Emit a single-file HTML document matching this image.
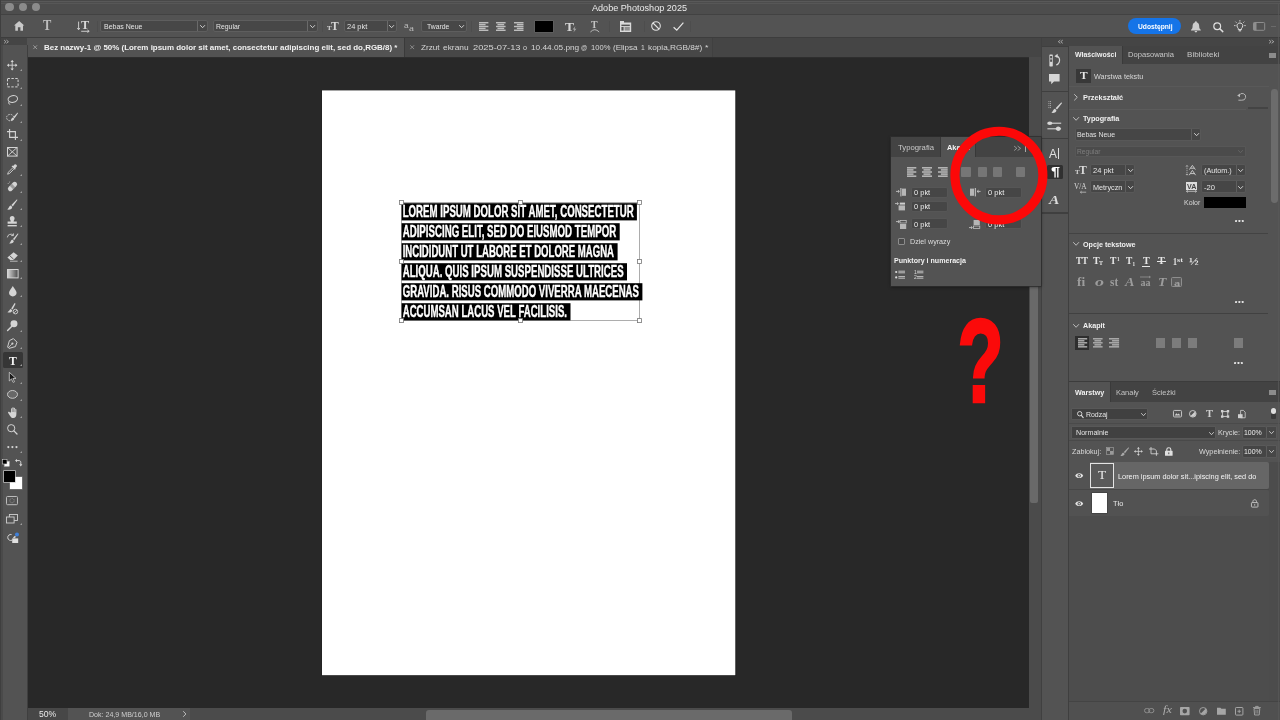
<!DOCTYPE html>
<html lang="pl">
<head>
<meta charset="utf-8">
<title>Adobe Photoshop 2025</title>
<style>
*{box-sizing:border-box;margin:0;padding:0}
html,body{width:1280px;height:720px;overflow:hidden;background:#535353}
body{font-family:"Liberation Sans",sans-serif;font-size:7.5px;color:#ddd;position:relative}
#app{position:absolute;left:0;top:0;width:1280px;height:720px;overflow:hidden;will-change:transform}
.a{position:absolute}
.t{position:absolute;white-space:nowrap;transform-origin:0 50%;display:block}
.b{font-weight:bold}
svg{position:absolute;overflow:visible}
.fld{position:absolute;background:#454545;box-shadow:0 0 0 .6px #6b6b6b}
</style>
</head>
<body>
<div id="app">
<!-- base -->
<div class="a" style="left:0px;top:0px;width:1280px;height:14.5px;background:#4d4d4d;"></div>
<div class="a" style="left:0px;top:0px;width:1280px;height:1px;background:#484848;"></div>
<div class="a" style="left:0px;top:1px;width:1280px;height:1px;background:#595959;"></div>
<div class="a" style="left:0px;top:3px;width:1280px;height:1px;background:#575757;"></div>
<div class="a" style="left:0px;top:13.6px;width:1280px;height:1.2px;background:#424242;"></div>
<div class="a" style="left:0px;top:14.8px;width:1280px;height:22.6px;background:#535353;"></div>
<div class="a" style="left:0px;top:37.2px;width:1280px;height:1px;background:#3d3d3d;"></div>
<div class="a" style="left:28px;top:38.2px;width:1002px;height:18.8px;background:#454545;"></div>
<div class="a" style="left:28px;top:57px;width:1001px;height:651.4px;background:#282828;"></div>
<div class="a" style="left:28px;top:56.6px;width:1001px;height:1px;background:#2e2e2e;"></div>
<div class="a" style="left:0px;top:38.2px;width:27.4px;height:681.8px;background:#535353;"></div>
<div class="a" style="left:0px;top:38.2px;width:27.4px;height:7.2px;background:#454545;"></div>
<div class="a" style="left:27px;top:45px;width:1px;height:675px;background:#3f3f3f;"></div>
<div class="a" style="left:0px;top:45px;width:2.6px;height:675px;background:#4a4a4a;"></div>
<div class="a" style="left:28px;top:708.4px;width:1001px;height:11.6px;background:#4b4b4b;"></div>
<div class="a" style="left:28px;top:708.4px;width:39.5px;height:11.6px;background:#474747;"></div>
<div class="a" style="left:67.5px;top:708.4px;width:122.5px;height:11.6px;background:#535353;"></div>
<div class="a" style="left:426px;top:710.4px;width:366px;height:9.6px;background:#6a6a6a;border-radius:3px 3px 0 0"></div>
<div class="a" style="left:1029px;top:38.2px;width:12px;height:681.8px;background:#4b4b4b;"></div>
<div class="a" style="left:1029px;top:38.2px;width:12px;height:18.8px;background:#454545;"></div>
<div class="a" style="left:1029.6px;top:263px;width:8.4px;height:240px;background:#696969;border-radius:0 0 2px 2px"></div>
<div class="a" style="left:1040.6px;top:38.2px;width:1.4px;height:681.8px;background:#404040;"></div>
<div class="a" style="left:1042px;top:38.2px;width:26px;height:681.8px;background:#535353;"></div>
<div class="a" style="left:1042px;top:38.2px;width:238px;height:7.8px;background:#454545;"></div>
<div class="a" style="left:1067.6px;top:46px;width:1.6px;height:674px;background:#3f3f3f;"></div>
<div class="a" style="left:1069px;top:46px;width:211px;height:674px;background:#535353;"></div>
<div class="a" style="left:0px;top:0px;width:1px;height:720px;background:#3f3f3f;"></div>
<span class="t" style="left:39.2px;top:710.35px;font-size:9px;line-height:9px;color:#e8e8e8;transform:scaleX(0.9548);">50%</span>
<span class="t" style="left:88.8px;top:710.7px;font-size:7.5px;line-height:7.5px;color:#cfcfcf;transform:scaleX(0.9436);">Dok: 24,9 MB/16,0 MB</span>
<svg style="left:183.3px;top:711.2px" width="3.4" height="6" viewBox="0 0 3.4 6"><path d="M0.5 0.5 L2.9 3 L0.5 5.5" fill="none" stroke="#c8c8c8" stroke-width="0.9" stroke-linecap="round" stroke-linejoin="round"/></svg>
<!-- top -->
<div class="a" style="left:5.2px;top:3.05px;width:8.4px;height:8.4px;background:#8b8b8b;border-radius:50%"></div>
<div class="a" style="left:18.55px;top:3.05px;width:8.4px;height:8.4px;background:#8b8b8b;border-radius:50%"></div>
<div class="a" style="left:31.8px;top:3.05px;width:8.4px;height:8.4px;background:#8b8b8b;border-radius:50%"></div>
<span class="t" style="left:592px;top:4.45px;font-size:9px;line-height:9px;color:#ececec;transform:scaleX(1.0097);">Adobe Photoshop 2025</span>
<svg style="left:13.5px;top:21.2px;" width="10.3" height="9.8" viewBox="0 0 10.3 9.8"><path d="M5.15 0 L10.3 4.6 L9 4.6 L9 9.8 L6.4 9.8 L6.4 6.3 L3.9 6.3 L3.9 9.8 L1.3 9.8 L1.3 4.6 L0 4.6 Z" fill="#c9c9c9"/></svg>
<span class="t b" style="left:42.5px;top:18.85px;font-size:13.8px;line-height:13.8px;color:#bdbdbd;transform:scaleX(0.9017);font-family:'Liberation Serif',serif;">T</span>
<span class="t b" style="left:81px;top:20.1px;font-size:11.5px;line-height:11.5px;color:#d8d8d8;transform:scaleX(1.0690);font-family:'Liberation Serif',serif;">T</span>
<svg style="left:77px;top:21px;" width="13" height="11.4" viewBox="0 0 13 11.4"><path d="M1.6 0.6 V8.4 M0.3 7 L1.6 8.8 L2.9 7" fill="none" stroke="#d8d8d8" stroke-width="0.9"/><path d="M4.2 10.3 H11.8 M10.4 9 L12.2 10.3 L10.4 11.4" fill="none" stroke="#d8d8d8" stroke-width="0.9"/></svg>
<div class="a" style="left:97.1px;top:21px;width:0.8px;height:10.5px;background:#4d4d4d;"></div>
<div class="a" style="left:101px;top:21px;width:105.5px;height:10.2px;background:#474747;box-shadow:0 0 0 .5px #6a6a6a;border-radius:1px"></div>
<div class="a" style="left:197.2px;top:21px;width:0.6px;height:10.2px;background:#6a6a6a;"></div>
<svg style="left:199.6px;top:24.9px" width="5.2" height="3.2" viewBox="0 0 5.2 3.2"><path d="M0.5 0.5 L2.6 2.7 L4.7 0.5" fill="none" stroke="#d0d0d0" stroke-width="1" stroke-linecap="round" stroke-linejoin="round"/></svg>
<span class="t" style="left:104px;top:23px;font-size:7.5px;line-height:7.5px;color:#e4e4e4;transform:scaleX(0.9326);">Bebas Neue</span>
<div class="a" style="left:213.5px;top:21px;width:103.5px;height:10.2px;background:#474747;box-shadow:0 0 0 .5px #6a6a6a;border-radius:1px"></div>
<div class="a" style="left:307.2px;top:21px;width:0.6px;height:10.2px;background:#6a6a6a;"></div>
<svg style="left:309.8px;top:24.9px" width="5.2" height="3.2" viewBox="0 0 5.2 3.2"><path d="M0.5 0.5 L2.6 2.7 L4.7 0.5" fill="none" stroke="#d0d0d0" stroke-width="1" stroke-linecap="round" stroke-linejoin="round"/></svg>
<span class="t" style="left:216px;top:23px;font-size:7.5px;line-height:7.5px;color:#e4e4e4;transform:scaleX(0.9137);">Regular</span>
<div class="a" style="left:321.6px;top:21px;width:0.8px;height:10.5px;background:#4d4d4d;"></div>
<span class="t b" style="left:330.5px;top:20.2px;font-size:12.5px;line-height:12.5px;color:#d8d8d8;transform:scaleX(0.9235);font-family:'Liberation Serif',serif;">T</span>
<span class="t b" style="left:326.6px;top:25.15px;font-size:7px;line-height:7px;color:#d8d8d8;transform:scaleX(0.9852);font-family:'Liberation Serif',serif;">T</span>
<div class="a" style="left:345px;top:21px;width:50.6px;height:10.2px;background:#474747;box-shadow:0 0 0 .5px #6a6a6a;border-radius:1px"></div>
<div class="a" style="left:386.7px;top:21px;width:0.6px;height:10.2px;background:#6a6a6a;"></div>
<svg style="left:388.8px;top:24.9px" width="5.2" height="3.2" viewBox="0 0 5.2 3.2"><path d="M0.5 0.5 L2.6 2.7 L4.7 0.5" fill="none" stroke="#d0d0d0" stroke-width="1" stroke-linecap="round" stroke-linejoin="round"/></svg>
<span class="t" style="left:347.2px;top:23px;font-size:7.5px;line-height:7.5px;color:#e4e4e4;transform:scaleX(0.9936);">24 pkt</span>
<span class="t" style="left:404px;top:22.05px;font-size:8px;line-height:8px;color:#bdbdbd;transform:scaleX(1.0339);">a</span>
<span class="t" style="left:408.6px;top:23.55px;font-size:8.6px;line-height:8.6px;color:#bdbdbd;transform:scaleX(1.3100);font-family:'Liberation Serif',serif;">a</span>
<div class="a" style="left:422px;top:21px;width:43.6px;height:10.2px;background:#474747;box-shadow:0 0 0 .5px #6a6a6a;border-radius:1px"></div>
<svg style="left:458.8px;top:24.9px" width="5.2" height="3.2" viewBox="0 0 5.2 3.2"><path d="M0.5 0.5 L2.6 2.7 L4.7 0.5" fill="none" stroke="#d0d0d0" stroke-width="1" stroke-linecap="round" stroke-linejoin="round"/></svg>
<span class="t" style="left:427px;top:23px;font-size:7.5px;line-height:7.5px;color:#e4e4e4;transform:scaleX(0.9107);">Twarde</span>
<div class="a" style="left:470.6px;top:21px;width:0.8px;height:10.5px;background:#4d4d4d;"></div>
<svg style="left:479px;top:22px;" width="9.4" height="9" viewBox="0 0 9.4 9"><rect x="0" y="0" width="9.4" height="1.44" fill="#bdbdbd"/><rect x="0" y="1.89" width="6.58" height="1.44" fill="#bdbdbd"/><rect x="0" y="3.78" width="9.4" height="1.44" fill="#bdbdbd"/><rect x="0" y="5.67" width="6.58" height="1.44" fill="#bdbdbd"/><rect x="0" y="7.56" width="9.4" height="1.44" fill="#bdbdbd"/></svg>
<svg style="left:496px;top:22px;" width="9.6" height="9" viewBox="0 0 9.6 9"><rect x="0" y="0" width="9.6" height="1.44" fill="#bdbdbd"/><rect x="1.44" y="1.89" width="6.72" height="1.44" fill="#bdbdbd"/><rect x="0" y="3.78" width="9.6" height="1.44" fill="#bdbdbd"/><rect x="1.44" y="5.67" width="6.72" height="1.44" fill="#bdbdbd"/><rect x="0" y="7.56" width="9.6" height="1.44" fill="#bdbdbd"/></svg>
<svg style="left:513.5px;top:22px;" width="9.5" height="9" viewBox="0 0 9.5 9"><rect x="0" y="0" width="9.5" height="1.44" fill="#bdbdbd"/><rect x="2.85" y="1.89" width="6.65" height="1.44" fill="#bdbdbd"/><rect x="0" y="3.78" width="9.5" height="1.44" fill="#bdbdbd"/><rect x="2.85" y="5.67" width="6.65" height="1.44" fill="#bdbdbd"/><rect x="0" y="7.56" width="9.5" height="1.44" fill="#bdbdbd"/></svg>
<div class="a" style="left:535px;top:21px;width:18px;height:11px;background:#000;box-shadow:0 0 0 .5px #6a6a6a"></div>
<span class="t b" style="left:564.6px;top:19.75px;font-size:13px;line-height:13px;color:#d8d8d8;transform:scaleX(1.0379);font-family:'Liberation Serif',serif;">T</span>
<svg style="left:571.5px;top:25.5px;" width="4.9" height="6.5" viewBox="0 0 4.9 6.5"><path d="M3.4 0 L0.6 3.6 H2.4 L1.4 6.5 L4.4 2.7 H2.6 Z" fill="#d8d8d8" stroke="#535353" stroke-width="0.4"/></svg>
<span class="t b" style="left:591.4px;top:20.4px;font-size:10.5px;line-height:10.5px;color:#c4c4c4;transform:scaleX(0.9423);font-family:'Liberation Serif',serif;">T</span>
<svg style="left:589.6px;top:28.6px;" width="9.6" height="3.4" viewBox="0 0 9.6 3.4"><path d="M0.4 3 Q4.8 -1.6 9.2 3" fill="none" stroke="#c4c4c4" stroke-width="0.9"/></svg>
<div class="a" style="left:608.6px;top:21px;width:0.8px;height:10.5px;background:#4d4d4d;"></div>
<svg style="left:620px;top:21px;" width="11.2" height="11" viewBox="0 0 11.2 11"><path d="M0 0 H4 V1.6 H11.2 V11 H0 Z" fill="#dadada"/><rect x="1.4" y="3.6" width="8.4" height="1.5" fill="#535353"/><rect x="1.4" y="6" width="2.2" height="3.6" fill="#535353"/><rect x="4.6" y="6" width="5.2" height="3.6" fill="#535353" opacity=".55"/></svg>
<div class="a" style="left:643.6px;top:21px;width:0.8px;height:10.5px;background:#4d4d4d;"></div>
<svg style="left:651px;top:21.3px;" width="10" height="10" viewBox="0 0 10 10"><circle cx="5" cy="5" r="4.3" fill="none" stroke="#e2e2e2" stroke-width="1.1"/><path d="M2 2 L8 8" stroke="#e2e2e2" stroke-width="1.1"/></svg>
<svg style="left:672.6px;top:22px;" width="11" height="8.8" viewBox="0 0 11 8.8"><path d="M0.6 5.2 L3.8 8.2 L10.4 0.6" fill="none" stroke="#e6e6e6" stroke-width="1.2"/></svg>
<div class="a" style="left:690.2px;top:21px;width:0.8px;height:10.5px;background:#4d4d4d;"></div>
<div class="a" style="left:1128px;top:17.6px;width:52.6px;height:16.8px;background:#1574e8;border-radius:9px"></div>
<span class="t b" style="left:1137.5px;top:22.7px;font-size:7.5px;line-height:7.5px;color:#fff;transform:scaleX(0.8903);">Udostępnij</span>
<svg style="left:1191.4px;top:20.6px;" width="9.8" height="11.4" viewBox="0 0 9.8 11.4"><path d="M4.9 0.2 C5.5 0.2 5.8 0.7 5.8 1.2 C7.6 1.8 8.2 3.4 8.2 5.2 C8.2 7.2 8.8 8 9.8 8.8 V9.5 H0 V8.8 C1 8 1.6 7.2 1.6 5.2 C1.6 3.4 2.2 1.8 4 1.2 C4 0.7 4.3 0.2 4.9 0.2 Z" fill="#cdcdcd"/><path d="M3.6 10.1 H6.2 C6.2 11 5.6 11.4 4.9 11.4 C4.2 11.4 3.6 11 3.6 10.1 Z" fill="#cdcdcd"/></svg>
<svg style="left:1213px;top:21.6px;" width="10.4" height="10.2" viewBox="0 0 10.4 10.2"><circle cx="4.2" cy="4.2" r="3.4" fill="none" stroke="#dedede" stroke-width="1.2"/><path d="M6.8 6.8 L9.8 9.6" stroke="#dedede" stroke-width="1.5" stroke-linecap="round"/></svg>
<svg style="left:1233.6px;top:20.4px;" width="11.8" height="11.6" viewBox="0 0 11.8 11.6"><path d="M5.9 3 C7.7 3 8.8 4.3 8.8 5.8 C8.8 7 8 7.7 7.5 8.6 V9.6 H4.3 V8.6 C3.8 7.7 3 7 3 5.8 C3 4.3 4.1 3 5.9 3 Z" fill="none" stroke="#e0e0e0" stroke-width="1"/><path d="M4.7 10.8 H7.1" stroke="#e0e0e0" stroke-width="1.1"/><path d="M5.9 0 V1.6 M1.4 1.6 L2.6 2.8 M10.4 1.6 L9.2 2.8 M0 5.6 H1.6 M10.2 5.6 H11.8" stroke="#e0e0e0" stroke-width="0.8"/></svg>
<svg style="left:1253px;top:22.2px;" width="12.2" height="8.8" viewBox="0 0 12.2 8.8"><rect x="0.5" y="0.5" width="11.2" height="7.8" rx="1" fill="none" stroke="#8e8e8e" stroke-width="1"/><rect x="0.5" y="0.5" width="3" height="7.8" fill="#8e8e8e"/></svg>
<div class="a" style="left:1270.6px;top:25.8px;width:5.4px;height:0.8px;background:#6a6a6a;"></div>
<div class="a" style="left:28px;top:38.2px;width:376.4px;height:18.8px;background:#535353;"></div>
<div class="a" style="left:404.4px;top:38.2px;width:0.8px;height:18.8px;background:#3a3a3a;"></div>
<div class="a" style="left:405.2px;top:38.2px;width:306.8px;height:18.8px;background:#474747;"></div>
<div class="a" style="left:712px;top:38.2px;width:0.6px;height:18.8px;background:#404040;"></div>
<svg style="left:33px;top:45.4px;" width="4.4" height="4.4" viewBox="0 0 4.4 4.4"><path d="M0.3 0.3 L4.1 4.1 M4.1 0.3 L0.3 4.1" stroke="#a8a8a8" stroke-width="0.8"/></svg>
<span class="t b" style="left:44.4px;top:43.95px;font-size:8px;line-height:8px;color:#f2f2f2;transform:scaleX(0.9930);">Bez nazwy-1 @ 50% (Lorem ipsum dolor sit amet, consectetur adipiscing elit, sed do,RGB/8) *</span>
<svg style="left:410.4px;top:45.4px;" width="4.4" height="4.4" viewBox="0 0 4.4 4.4"><path d="M0.3 0.3 L4.1 4.1 M4.1 0.3 L0.3 4.1" stroke="#9a9a9a" stroke-width="0.8"/></svg>
<span class="t" style="left:421px;top:43.95px;font-size:8px;line-height:8px;color:#d6d6d6;transform:scaleX(1.0207);">Zrzut</span><span class="t" style="left:443px;top:43.95px;font-size:8px;line-height:8px;color:#d6d6d6;transform:scaleX(1.0465);">ekranu</span><span class="t" style="left:472.5px;top:43.95px;font-size:8px;line-height:8px;color:#d6d6d6;transform:scaleX(1.1607);">2025-07-13</span><span class="t" style="left:523px;top:43.95px;font-size:8px;line-height:8px;color:#d6d6d6;transform:scaleX(0.8990);">o</span><span class="t" style="left:530.6px;top:43.95px;font-size:8px;line-height:8px;color:#d6d6d6;transform:scaleX(1.0319);">10.44.05.png</span><span class="t" style="left:581.4px;top:43.95px;font-size:8px;line-height:8px;color:#d6d6d6;transform:scaleX(0.7634);">@</span><span class="t" style="left:590.6px;top:43.95px;font-size:8px;line-height:8px;color:#d6d6d6;transform:scaleX(0.9481);">100%</span><span class="t" style="left:613px;top:43.95px;font-size:8px;line-height:8px;color:#d6d6d6;transform:scaleX(1.0060);">(Elipsa</span><span class="t" style="left:641.2px;top:43.95px;font-size:8px;line-height:8px;color:#d6d6d6;transform:scaleX(0.8541);">1</span><span class="t" style="left:647.8px;top:43.95px;font-size:8px;line-height:8px;color:#d6d6d6;transform:scaleX(1.0330);">kopia,RGB/8#)</span><span class="t" style="left:704.6px;top:43.95px;font-size:8px;line-height:8px;color:#d6d6d6;transform:scaleX(1.0922);">*</span>
<svg style="left:3.8px;top:39.9px" width="4.6" height="3.4" viewBox="0 0 4.6 3.4"><path d="M0.4 0.3 L1.93 1.7 L0.4 3.1 M2.67 0.3 L4.4 1.7 L2.67 3.1" fill="none" stroke="#c4c4c4" stroke-width="0.75" stroke-linejoin="round" stroke-linecap="round"/></svg>
<svg style="left:1058.2px;top:39.9px" width="4.8" height="3.4" viewBox="0 0 4.8 3.4"><path d="M2.02 0.3 L0.3 1.7 L2.02 3.1 M4.5 0.3 L2.78 1.7 L4.5 3.1" fill="none" stroke="#c4c4c4" stroke-width="0.75" stroke-linejoin="round" stroke-linecap="round"/></svg>
<svg style="left:1269.4px;top:39.9px" width="5" height="3.4" viewBox="0 0 5 3.4"><path d="M0.4 0.3 L2.1 1.7 L0.4 3.1 M2.9 0.3 L4.8 1.7 L2.9 3.1" fill="none" stroke="#c4c4c4" stroke-width="0.75" stroke-linejoin="round" stroke-linecap="round"/></svg>
<!-- tools -->
<svg style="left:7.2px;top:60.3px;" width="10.4" height="10.4" viewBox="0 0 10.4 10.4"><path d="M5.2 0.6 V9.8 M0.6 5.2 H9.8" stroke="#d4d4d4" fill="none" stroke-width="0.9"/><path d="M5.2 0 L6.9 2 H3.5 Z M5.2 10.4 L6.9 8.4 H3.5 Z M0 5.2 L2 3.5 V6.9 Z M10.4 5.2 L8.4 3.5 V6.9 Z" fill="#d4d4d4"/></svg>
<svg style="left:19.7px;top:69.4px;" width="2" height="2" viewBox="0 0 2 2"><path d="M2 0 V2 H0 Z" fill="#a0a0a0"/></svg>
<svg style="left:6.6px;top:77.9px;" width="11.6" height="9.4" viewBox="0 0 11.6 9.4"><rect x="0.5" y="0.5" width="10.6" height="8.4" stroke="#d4d4d4" fill="none" stroke-width="1" stroke-dasharray="2.4 1.5"/></svg>
<svg style="left:19.7px;top:86.5px;" width="2" height="2" viewBox="0 0 2 2"><path d="M2 0 V2 H0 Z" fill="#a0a0a0"/></svg>
<svg style="left:6.9px;top:95.2px;" width="11" height="10" viewBox="0 0 11 10"><ellipse cx="5.8" cy="4" rx="4.8" ry="3.4" stroke="#d4d4d4" fill="none" stroke-width="0.95" transform="rotate(-12 5.8 4)"/><path d="M2.4 6.6 C1 7.4 1.4 9 3.2 9.4" stroke="#d4d4d4" fill="none" stroke-width="0.9"/></svg>
<svg style="left:19.7px;top:104.1px;" width="2" height="2" viewBox="0 0 2 2"><path d="M2 0 V2 H0 Z" fill="#a0a0a0"/></svg>
<svg style="left:6.4px;top:112.2px;" width="12" height="10.4" viewBox="0 0 12 10.4"><ellipse cx="4.2" cy="5.6" rx="3.6" ry="3.2" stroke="#d4d4d4" fill="none" stroke-width="0.9" stroke-dasharray="1.6 1.1"/><path d="M11.6 0.4 L7.4 5 L8.6 6.2 L12 1.2 Z" fill="#d4d4d4"/><path d="M6.9 5.6 C5.6 6 5.4 7.8 4.4 8.4 C6.4 9 8 8 8.2 6.8 Z" fill="#d4d4d4"/></svg>
<svg style="left:19.7px;top:121.3px;" width="2" height="2" viewBox="0 0 2 2"><path d="M2 0 V2 H0 Z" fill="#a0a0a0"/></svg>
<svg style="left:6.9px;top:129.1px;" width="11" height="11" viewBox="0 0 11 11"><path d="M2.6 0 V8.4 H11 M0 2.6 H8.4 V11" stroke="#d4d4d4" fill="none" stroke-width="1.1"/></svg>
<svg style="left:19.7px;top:138.5px;" width="2" height="2" viewBox="0 0 2 2"><path d="M2 0 V2 H0 Z" fill="#a0a0a0"/></svg>
<svg style="left:7.1px;top:147.4px;" width="10.6" height="9.6" viewBox="0 0 10.6 9.6"><rect x="0.5" y="0.5" width="9.6" height="8.6" stroke="#d4d4d4" fill="none" stroke-width="1"/><path d="M0.5 0.5 L10.1 9.1 M10.1 0.5 L0.5 9.1" stroke="#d4d4d4" fill="none" stroke-width="0.9"/></svg>
<svg style="left:7.1px;top:164.4px;" width="10.6" height="10.8" viewBox="0 0 10.6 10.8"><path d="M7.6 0.4 C8.6 -0.4 10.6 1.4 9.8 2.6 L8.2 4.2 L8.8 4.8 L7.9 5.7 L4.6 2.4 L5.5 1.5 L6.1 2.1 Z" fill="#d4d4d4"/><path d="M5.6 4 L1.4 8.2 L0.6 10.2 L2.6 9.4 L6.8 5.2" stroke="#d4d4d4" fill="none" stroke-width="0.9"/></svg>
<svg style="left:19.7px;top:173.7px;" width="2" height="2" viewBox="0 0 2 2"><path d="M2 0 V2 H0 Z" fill="#a0a0a0"/></svg>
<svg style="left:6.9px;top:181.1px;" width="11" height="11" viewBox="0 0 11 11"><g transform="rotate(-45 5.5 5.5)"><rect x="0" y="3.1" width="11" height="4.8" rx="2.4" fill="#d4d4d4"/><rect x="4" y="3.1" width="3" height="4.8" fill="#535353" opacity=".45"/></g><path d="M1 3 A4 4 0 0 1 3.6 0.6" stroke="#d4d4d4" fill="none" stroke-width="0.8" stroke-dasharray="1 1"/></svg>
<svg style="left:19.7px;top:190.5px;" width="2" height="2" viewBox="0 0 2 2"><path d="M2 0 V2 H0 Z" fill="#a0a0a0"/></svg>
<svg style="left:7.2px;top:198.5px;" width="10.4" height="11" viewBox="0 0 10.4 11"><path d="M10 0.2 L4.4 6 L5.8 7.4 L10.4 1 Z" fill="#d4d4d4"/><path d="M3.8 6.6 C2 7 2.2 9.2 0.2 10.6 C3 11.2 5.2 10 5.2 8 Z" fill="#d4d4d4"/></svg>
<svg style="left:19.7px;top:207.9px;" width="2" height="2" viewBox="0 0 2 2"><path d="M2 0 V2 H0 Z" fill="#a0a0a0"/></svg>
<svg style="left:7.2px;top:215.9px;" width="10.4" height="10.6" viewBox="0 0 10.4 10.6"><path d="M5.2 0 C6.8 0 7.6 1.2 7.6 2.4 C7.6 3.6 6.6 4.2 6.6 5.4 H9.8 V7.8 H0.6 V5.4 H3.8 C3.8 4.2 2.8 3.6 2.8 2.4 C2.8 1.2 3.6 0 5.2 0 Z" fill="#d4d4d4"/><rect x="0.6" y="9" width="9.2" height="1.4" fill="#d4d4d4"/></svg>
<svg style="left:19.7px;top:225.1px;" width="2" height="2" viewBox="0 0 2 2"><path d="M2 0 V2 H0 Z" fill="#a0a0a0"/></svg>
<svg style="left:6.7px;top:233.3px;" width="11.4" height="11" viewBox="0 0 11.4 11"><path d="M11 0.2 L6 6 L7.2 7.2 L11.4 1 Z" fill="#d4d4d4"/><path d="M5.4 6.6 C3.8 7 4 9 2.2 10.4 C4.8 11 6.8 9.8 6.8 8 Z" fill="#d4d4d4"/><path d="M0.4 4.4 A3.4 3.4 0 0 1 6.2 2.2 M6.4 0.4 V2.6 H4.2" stroke="#d4d4d4" fill="none" stroke-width="0.9"/></svg>
<svg style="left:19.7px;top:242.7px;" width="2" height="2" viewBox="0 0 2 2"><path d="M2 0 V2 H0 Z" fill="#a0a0a0"/></svg>
<svg style="left:6.9px;top:251.6px;" width="11" height="9.6" viewBox="0 0 11 9.6"><path d="M6.6 0.2 L10.8 3.6 L6.4 8 H3.2 L0.4 5.6 Z" fill="#d4d4d4"/><path d="M2.6 3.6 L6.6 7.2" stroke="#535353" stroke-width="0.9"/><path d="M3 9.2 H10.6" stroke="#d4d4d4" fill="none" stroke-width="0.8"/></svg>
<svg style="left:19.7px;top:260.3px;" width="2" height="2" viewBox="0 0 2 2"><path d="M2 0 V2 H0 Z" fill="#a0a0a0"/></svg>
<svg style="left:6.6px;top:268.7px" width="11.6" height="9.4" viewBox="0 0 11.6 9.4"><defs><linearGradient id="gr" x1="0" x2="1" y1="0" y2="0"><stop offset="0" stop-color="#d8d8d8"/><stop offset="1" stop-color="#4a4a4a"/></linearGradient></defs><rect x="0.5" y="0.5" width="10.6" height="8.4" fill="url(#gr)" stroke="#d4d4d4" stroke-width="1"/></svg>
<svg style="left:19.7px;top:277.3px;" width="2" height="2" viewBox="0 0 2 2"><path d="M2 0 V2 H0 Z" fill="#a0a0a0"/></svg>
<svg style="left:8.6px;top:285.8px;" width="7.6" height="10.4" viewBox="0 0 7.6 10.4"><path d="M3.8 0 C5 2.6 7.6 4.6 7.6 6.8 C7.6 8.8 6 10.4 3.8 10.4 C1.6 10.4 0 8.8 0 6.8 C0 4.6 2.6 2.6 3.8 0 Z" fill="#d4d4d4"/></svg>
<svg style="left:19.7px;top:294.9px;" width="2" height="2" viewBox="0 0 2 2"><path d="M2 0 V2 H0 Z" fill="#a0a0a0"/></svg>
<svg style="left:6.9px;top:302.7px;" width="11" height="11.4" viewBox="0 0 11 11.4"><path d="M7.6 0 L4.2 5.6 L5.6 6.6 L8.6 0.8 Z" fill="#d4d4d4"/><path d="M3.8 6 C2.4 6.4 2.4 8.2 0.4 9.2 C2.8 10.2 5 9.2 5.2 7.2 Z" fill="#d4d4d4"/><circle cx="8.4" cy="8.6" r="2.3" stroke="#d4d4d4" fill="none" stroke-width="0.9"/><path d="M6.8 10 L10 7.2" stroke="#d4d4d4" fill="none" stroke-width="0.8"/></svg>
<svg style="left:7px;top:320px;" width="10.8" height="11.2" viewBox="0 0 10.8 11.2"><circle cx="7" cy="3.8" r="3.5" fill="#d4d4d4"/><path d="M4.6 6.4 L0.6 10.6" stroke="#d4d4d4" fill="none" stroke-width="1.4" stroke-linecap="round"/></svg>
<svg style="left:19.7px;top:329.5px;" width="2" height="2" viewBox="0 0 2 2"><path d="M2 0 V2 H0 Z" fill="#a0a0a0"/></svg>
<svg style="left:7.1px;top:337.5px;" width="10.6" height="11" viewBox="0 0 10.6 11"><path d="M6.4 0.6 L10 4.2 L8.4 8.6 L2 10.4 L0.6 9 L2.4 2.6 Z" stroke="#d4d4d4" fill="none" stroke-width="0.95" stroke-linejoin="round"/><circle cx="5.4" cy="5.6" r="1.1" fill="#d4d4d4"/><path d="M1.2 9.8 L4.8 6.2" stroke="#d4d4d4" fill="none" stroke-width="0.8"/></svg>
<svg style="left:19.7px;top:346.9px;" width="2" height="2" viewBox="0 0 2 2"><path d="M2 0 V2 H0 Z" fill="#a0a0a0"/></svg>
<div class="a" style="left:3.2px;top:352.4px;width:19.8px;height:15.4px;background:#363636;border-radius:1.5px"></div>
<span class="t b" style="left:8.6px;top:353.55px;font-size:13px;line-height:13px;color:#f4f4f4;transform:scaleX(0.8995);font-family:'Liberation Serif',serif;">T</span>
<svg style="left:19.7px;top:364.1px;" width="2" height="2" viewBox="0 0 2 2"><path d="M2 0 V2 H0 Z" fill="#a0a0a0"/></svg>
<svg style="left:9.3px;top:372.3px;" width="7.4" height="10.6" viewBox="0 0 7.4 10.6"><path d="M0.3 0.3 V9 L2.5 6.9 L4.1 10.4 L5.5 9.8 L3.9 6.4 H7 Z" fill="#1a1a1a" stroke="#d4d4d4" stroke-width="0.8" stroke-linejoin="round"/></svg>
<svg style="left:19.7px;top:381.5px;" width="2" height="2" viewBox="0 0 2 2"><path d="M2 0 V2 H0 Z" fill="#a0a0a0"/></svg>
<svg style="left:6.9px;top:390.2px;" width="11" height="8.8" viewBox="0 0 11 8.8"><ellipse cx="5.5" cy="4.4" rx="5" ry="3.9" fill="#686868" stroke="#d4d4d4" stroke-width="0.9"/></svg>
<svg style="left:19.7px;top:398.5px;" width="2" height="2" viewBox="0 0 2 2"><path d="M2 0 V2 H0 Z" fill="#a0a0a0"/></svg>
<svg style="left:7.6px;top:406.5px;" width="10.4" height="11" viewBox="0 0 10.4 11"><path d="M3 5.6 V1.8 C3 0.9 4.3 0.9 4.3 1.8 V0.9 C4.3 0 5.7 0 5.7 0.9 V1.4 C5.7 0.6 7.1 0.6 7.1 1.4 V2.4 C7.1 1.7 8.4 1.7 8.4 2.5 V7 C8.4 9.4 7.2 11 5.4 11 C3.6 11 2.8 10 1.8 8.4 L0.2 6 C-0.3 5.2 0.8 4.4 1.6 5.2 Z" fill="#d4d4d4"/><path d="M4.3 1.6 V5 M5.7 1.4 V5 M7.1 2.4 V5.2" stroke="#535353" stroke-width="0.5"/></svg>
<svg style="left:19.7px;top:415.9px;" width="2" height="2" viewBox="0 0 2 2"><path d="M2 0 V2 H0 Z" fill="#a0a0a0"/></svg>
<svg style="left:7.1px;top:423.9px;" width="10.6" height="10.6" viewBox="0 0 10.6 10.6"><circle cx="4.2" cy="4.2" r="3.6" stroke="#d4d4d4" fill="none" stroke-width="1"/><path d="M6.9 6.9 L10 10" stroke="#d4d4d4" fill="none" stroke-width="1.3" stroke-linecap="round"/></svg>
<svg style="left:7.2px;top:445.6px;" width="10.8" height="2.2" viewBox="0 0 10.8 2.2"><circle cx="1.3" cy="1.1" r="1.1" fill="#d4d4d4"/><circle cx="5.4" cy="1.1" r="1.1" fill="#d4d4d4"/><circle cx="9.5" cy="1.1" r="1.1" fill="#d4d4d4"/></svg>
<svg style="left:19.7px;top:451.2px;" width="2" height="2" viewBox="0 0 2 2"><path d="M2 0 V2 H0 Z" fill="#a0a0a0"/></svg>
<svg style="left:2.4px;top:459px;" width="7.6" height="7.6" viewBox="0 0 7.6 7.6"><rect x="2.6" y="2.6" width="4.6" height="4.6" fill="#fff" stroke="#d0d0d0" stroke-width="0.6"/><rect x="0.4" y="0.4" width="4.6" height="4.6" fill="#000" stroke="#d0d0d0" stroke-width="0.6"/></svg>
<svg style="left:15.4px;top:459px;" width="7.2" height="7.4" viewBox="0 0 7.2 7.4"><path d="M1.6 1.6 H4 C5.2 1.6 5.8 2.4 5.8 3.4 V5.6" fill="none" stroke="#dcdcdc" stroke-width="1"/><path d="M0 1.6 L2 0 V3.2 Z M5.8 7.4 L4.2 5.2 H7.4 Z" fill="#dcdcdc"/></svg>
<div class="a" style="left:10.2px;top:476.8px;width:12.2px;height:12.2px;background:#fff;box-shadow:0 0 0 .5px #8a8a8a"></div>
<div class="a" style="left:3.8px;top:471px;width:11px;height:10.6px;background:#000;box-shadow:0 0 0 .7px #c8c8c8"></div>
<svg style="left:6.2px;top:496.4px;" width="12" height="9.2" viewBox="0 0 12 9.2"><rect x="0.5" y="0.5" width="11" height="8.2" rx="1" fill="none" stroke="#bdbdbd" stroke-width="1"/><circle cx="6" cy="4.6" r="2.2" fill="none" stroke="#9a9a9a" stroke-width="0.9" stroke-dasharray="1 0.8"/></svg>
<svg style="left:6.2px;top:514px;" width="12" height="9.6" viewBox="0 0 12 9.6"><rect x="3.4" y="0.5" width="8.1" height="6" fill="#535353" stroke="#cfcfcf" stroke-width="0.9"/><rect x="0.5" y="3" width="7.6" height="6" fill="#535353" stroke="#cfcfcf" stroke-width="0.9"/></svg>
<svg style="left:19.7px;top:522.9px;" width="2" height="2" viewBox="0 0 2 2"><path d="M2 0 V2 H0 Z" fill="#a0a0a0"/></svg>
<svg style="left:7px;top:532.4px;" width="12.2" height="11.8" viewBox="0 0 12.2 11.8"><path d="M4.6 2.6 A3 3 0 1 0 5 8.2" fill="none" stroke="#d6d6d6" stroke-width="1"/><rect x="5.2" y="6.4" width="6" height="4.6" fill="#e0e0e0"/><path d="M6 5.4 L8 3.8 L9 5 L7 6.6 Z" fill="#d6d6d6"/><circle cx="10" cy="2.6" r="2" fill="#3f7fd8"/></svg>
<!-- doc -->
<svg style="left:0;top:0" width="1280" height="720" viewBox="0 0 1280 720"><rect x="321.6" y="90" width="414.5" height="586" fill="#1c1c1c"/><rect x="322" y="90.4" width="413.3" height="584.8" fill="#fff"/></svg>
<svg style="left:0;top:0" width="1280" height="720" viewBox="0 0 1280 720"><rect x="401.4" y="202.5" width="238.2" height="118.1" fill="none" stroke="#8a8a8a" stroke-width="0.7"/></svg>
<svg style="left:0;top:0" width="1280" height="720" viewBox="0 0 1280 720"><rect x="401.6" y="203.2" width="235.3" height="17.2" fill="#000"/></svg>
<svg style="left:0;top:0" width="1280" height="720" viewBox="0 0 1280 720"><rect x="401.6" y="223.2" width="218.1" height="17.2" fill="#000"/></svg>
<svg style="left:0;top:0" width="1280" height="720" viewBox="0 0 1280 720"><rect x="401.6" y="243.2" width="216" height="17.2" fill="#000"/></svg>
<svg style="left:0;top:0" width="1280" height="720" viewBox="0 0 1280 720"><rect x="401.6" y="263.2" width="225.4" height="17.2" fill="#000"/></svg>
<svg style="left:0;top:0" width="1280" height="720" viewBox="0 0 1280 720"><rect x="401.6" y="283.2" width="240.8" height="17.2" fill="#000"/></svg>
<svg style="left:0;top:0" width="1280" height="720" viewBox="0 0 1280 720"><rect x="401.6" y="303.2" width="168.9" height="17.2" fill="#000"/></svg>
<svg style="left:0;top:0" width="1280" height="720" viewBox="0 0 1280 720"><g font-family="'Liberation Sans',sans-serif" font-weight="bold" font-size="17.3" fill="#fff" stroke="#fff" stroke-width="0.45" stroke-linejoin="round"><text x="402.7" y="217" textLength="231" lengthAdjust="spacingAndGlyphs">LOREM IPSUM DOLOR SIT AMET, CONSECTETUR</text><text x="402.7" y="237" textLength="213.5" lengthAdjust="spacingAndGlyphs">ADIPISCING ELIT, SED DO EIUSMOD TEMPOR</text><text x="402.7" y="257" textLength="211.3" lengthAdjust="spacingAndGlyphs">INCIDIDUNT UT LABORE ET DOLORE MAGNA</text><text x="402.7" y="277" textLength="220.9" lengthAdjust="spacingAndGlyphs">ALIQUA. QUIS IPSUM SUSPENDISSE ULTRICES</text><text x="402.7" y="297" textLength="236.3" lengthAdjust="spacingAndGlyphs">GRAVIDA. RISUS COMMODO VIVERRA MAECENAS</text><text x="402.7" y="317" textLength="164.3" lengthAdjust="spacingAndGlyphs">ACCUMSAN LACUS VEL FACILISIS.</text></g></svg>
<svg style="left:0;top:0" width="1280" height="720" viewBox="0 0 1280 720"><rect x="399.4" y="200.5" width="4" height="4" fill="#fff" stroke="#777" stroke-width="0.8"/></svg>
<svg style="left:0;top:0" width="1280" height="720" viewBox="0 0 1280 720"><rect x="518.5" y="200.5" width="4" height="4" fill="#fff" stroke="#777" stroke-width="0.8"/></svg>
<svg style="left:0;top:0" width="1280" height="720" viewBox="0 0 1280 720"><rect x="637.6" y="200.5" width="4" height="4" fill="#fff" stroke="#777" stroke-width="0.8"/></svg>
<svg style="left:0;top:0" width="1280" height="720" viewBox="0 0 1280 720"><rect x="399.4" y="259.55" width="4" height="4" fill="#fff" stroke="#777" stroke-width="0.8"/></svg>
<svg style="left:0;top:0" width="1280" height="720" viewBox="0 0 1280 720"><rect x="637.6" y="259.55" width="4" height="4" fill="#fff" stroke="#777" stroke-width="0.8"/></svg>
<svg style="left:0;top:0" width="1280" height="720" viewBox="0 0 1280 720"><rect x="399.4" y="318.6" width="4" height="4" fill="#fff" stroke="#777" stroke-width="0.8"/></svg>
<svg style="left:0;top:0" width="1280" height="720" viewBox="0 0 1280 720"><rect x="518.5" y="318.6" width="4" height="4" fill="#fff" stroke="#777" stroke-width="0.8"/></svg>
<svg style="left:0;top:0" width="1280" height="720" viewBox="0 0 1280 720"><rect x="637.6" y="318.6" width="4" height="4" fill="#fff" stroke="#777" stroke-width="0.8"/></svg>
<!-- dock -->
<div class="a" style="left:1042px;top:90.6px;width:26px;height:1.4px;background:#3f3f3f;"></div>
<div class="a" style="left:1042px;top:137.6px;width:26px;height:1.4px;background:#3f3f3f;"></div>
<div class="a" style="left:1042px;top:212.2px;width:26px;height:1.4px;background:#3f3f3f;"></div>
<div class="a" style="left:1042px;top:45.6px;width:26px;height:1px;background:#3f3f3f;"></div>
<svg style="left:1048.6px;top:53px;" width="11.6" height="14" viewBox="0 0 11.6 14"><rect x="0.4" y="1.4" width="3.4" height="12" rx="0.6" fill="#d6d6d6"/><rect x="1.1" y="3" width="2" height="2.4" fill="#535353"/><rect x="1.1" y="6.4" width="2" height="2.4" fill="#535353"/><path d="M7.4 2.6 C10 3.6 11.4 6.4 10.2 9.2 C9.6 10.6 8.6 11.6 7.2 12" fill="none" stroke="#d6d6d6" stroke-width="1.2"/><path d="M5.4 3.2 L8.6 0.8 L8.6 5 Z" fill="#d6d6d6"/></svg>
<svg style="left:1049px;top:74.4px;" width="10.6" height="10.2" viewBox="0 0 10.6 10.2"><path d="M0 0 H10.6 V7.4 H5 L2.2 10.2 V7.4 H0 Z" fill="#d6d6d6"/></svg>
<svg style="left:1047.6px;top:100.8px;" width="14" height="12.4" viewBox="0 0 14 12.4"><path d="M13.4 1.2 L7.6 7.2 L9 8.6 L14 2.2 Z" fill="#d6d6d6"/><path d="M7 7.8 C5.2 8.2 5.4 10.4 3.4 11.8 C6.2 12.4 8.4 11.2 8.4 9.2 Z" fill="#d6d6d6"/><path d="M0.4 0.6 H3 M0.4 2.6 H3 M0.4 4.6 H3 M0.4 6.6 H3" stroke="#b4b4b4" stroke-width="0.9" stroke-dasharray="1 0.6"/></svg>
<svg style="left:1046.8px;top:121px;" width="14.6" height="10.8" viewBox="0 0 14.6 10.8"><ellipse cx="2.8" cy="2.2" rx="2.6" ry="1.7" fill="#d6d6d6"/><path d="M5 2.2 H14.2" stroke="#d6d6d6" stroke-width="1.1"/><path d="M0.4 7.8 H9" stroke="#d6d6d6" stroke-width="1.1"/><path d="M8.6 7.8 C9.6 5 12.4 4.8 14.2 7.8 C12.4 10.8 9.6 10.6 8.6 7.8 Z" fill="#d6d6d6"/></svg>
<span class="t" style="left:1049.4px;top:147.85px;font-size:12.4px;line-height:12.4px;color:#e0e0e0;transform:scaleX(0.9672);">A</span>
<div class="a" style="left:1058.4px;top:148.4px;width:0.9px;height:11px;background:#e0e0e0;"></div>
<div class="a" style="left:1046.8px;top:164.6px;width:16.6px;height:14.4px;background:#303030;border-radius:1.5px"></div>
<span class="t b" style="left:1050.6px;top:165.95px;font-size:12.6px;line-height:12.6px;color:#fff;transform:scaleX(1.2843);">¶</span>
<span class="t" style="left:1049.2px;top:192.95px;font-size:13px;line-height:13px;color:#dcdcdc;transform:scaleX(1.1993);font-family:'Liberation Serif',serif;font-style:italic;font-weight:bold;">A</span>
<!-- props -->
<div class="a" style="left:1069px;top:46px;width:211px;height:18.4px;background:#434343;"></div>
<div class="a" style="left:1069px;top:46px;width:53px;height:19px;background:#535353;"></div>
<div class="a" style="left:1122px;top:46px;width:0.8px;height:18.4px;background:#3a3a3a;"></div>
<span class="t b" style="left:1074.6px;top:51.15px;font-size:7.6px;line-height:7.6px;color:#f0f0f0;transform:scaleX(0.9160);">Właściwości</span>
<span class="t" style="left:1128px;top:51.15px;font-size:7.6px;line-height:7.6px;color:#c8c8c8;transform:scaleX(0.9988);">Dopasowania</span>
<span class="t" style="left:1186.6px;top:51.15px;font-size:7.6px;line-height:7.6px;color:#c8c8c8;transform:scaleX(1.0652);">Biblioteki</span>
<div class="a" style="left:1269px;top:52.6px;width:7px;height:5.2px;background:#8c8c8c;"></div>
<div class="a" style="left:1076px;top:69px;width:14.6px;height:13.8px;background:#383838;"></div>
<span class="t b" style="left:1079.6px;top:70.35px;font-size:11px;line-height:11px;color:#e8e8e8;transform:scaleX(1.0358);font-family:'Liberation Serif',serif;">T</span>
<span class="t" style="left:1093.8px;top:73.2px;font-size:7.5px;line-height:7.5px;color:#d8d8d8;transform:scaleX(0.9650);">Warstwa tekstu</span>
<div class="a" style="left:1069px;top:86px;width:200px;height:0.8px;background:#595959;"></div>
<svg style="left:1073.7px;top:94.4px" width="3.8" height="6.6" viewBox="0 0 3.8 6.6"><path d="M0.5 0.5 L3.3 3.3 L0.5 6.1" fill="none" stroke="#c8c8c8" stroke-width="0.9" stroke-linecap="round" stroke-linejoin="round"/></svg>
<span class="t b" style="left:1082.8px;top:94.35px;font-size:7.6px;line-height:7.6px;color:#f0f0f0;transform:scaleX(0.9685);">Przekształć</span>
<svg style="left:1236.8px;top:92.2px;" width="9.4" height="9" viewBox="0 0 9.4 9"><path d="M2.2 3.4 A3.4 3.4 0 1 1 4.8 8.2 H1.4" fill="none" stroke="#bdbdbd" stroke-width="0.9"/><path d="M0.2 3.4 L3 1.4 V5.2 Z" fill="#bdbdbd"/></svg>
<div class="a" style="left:1069px;top:109.2px;width:177px;height:0.8px;background:#5b5b5b;"></div>
<div class="a" style="left:1248px;top:107.4px;width:20.4px;height:1.8px;background:#444;"></div>
<svg style="left:1072.9px;top:116.9px" width="6.2" height="3.8" viewBox="0 0 6.2 3.8"><path d="M0.5 0.5 L3.1 3.3 L5.7 0.5" fill="none" stroke="#c8c8c8" stroke-width="0.9" stroke-linecap="round" stroke-linejoin="round"/></svg>
<span class="t b" style="left:1083px;top:115.25px;font-size:7.6px;line-height:7.6px;color:#f0f0f0;transform:scaleX(0.9507);">Typografia</span>
<div class="a" style="left:1075.6px;top:128.6px;width:124.4px;height:11.4px;background:#464646;box-shadow:0 0 0 .5px #5e5e5e;border-radius:1px"></div>
<div class="a" style="left:1190.7px;top:128.6px;width:0.6px;height:11.4px;background:#5e5e5e;"></div>
<svg style="left:1193.6px;top:133.1px" width="5.2" height="3.2" viewBox="0 0 5.2 3.2"><path d="M0.5 0.5 L2.6 2.7 L4.7 0.5" fill="none" stroke="#d0d0d0" stroke-width="1" stroke-linecap="round" stroke-linejoin="round"/></svg>
<span class="t" style="left:1077px;top:131.3px;font-size:7.5px;line-height:7.5px;color:#e0e0e0;transform:scaleX(0.9205);">Bebas Neue</span>
<div class="a" style="left:1075.6px;top:146.6px;width:169.4px;height:9px;background:#4b4b4b;box-shadow:0 0 0 .5px #5c5c5c"></div>
<span class="t" style="left:1077px;top:148.1px;font-size:7.5px;line-height:7.5px;color:#7e7e7e;transform:scaleX(0.8947);">Regular</span>
<svg style="left:1237.5px;top:149.8px" width="5" height="3.2" viewBox="0 0 5 3.2"><path d="M0.5 0.5 L2.5 2.7 L4.5 0.5" fill="none" stroke="#666" stroke-width="0.9" stroke-linecap="round" stroke-linejoin="round"/></svg>
<span class="t b" style="left:1078.6px;top:164.2px;font-size:12.5px;line-height:12.5px;color:#d8d8d8;transform:scaleX(0.9355);font-family:'Liberation Serif',serif;">T</span>
<span class="t b" style="left:1074.6px;top:169.15px;font-size:7px;line-height:7px;color:#d8d8d8;transform:scaleX(0.9852);font-family:'Liberation Serif',serif;">T</span>
<div class="a" style="left:1091.4px;top:165.2px;width:43.1px;height:10.2px;background:#464646;box-shadow:0 0 0 .5px #5e5e5e;border-radius:1px"></div>
<div class="a" style="left:1125.3px;top:165.2px;width:0.6px;height:10.2px;background:#5e5e5e;"></div>
<svg style="left:1127.8px;top:169.1px" width="5.2" height="3.2" viewBox="0 0 5.2 3.2"><path d="M0.5 0.5 L2.6 2.7 L4.7 0.5" fill="none" stroke="#d0d0d0" stroke-width="1" stroke-linecap="round" stroke-linejoin="round"/></svg>
<span class="t" style="left:1092.8px;top:167.2px;font-size:7.5px;line-height:7.5px;color:#e6e6e6;transform:scaleX(1.0083);">24 pkt</span>
<svg style="left:1185.8px;top:165px;" width="10.2" height="10.6" viewBox="0 0 10.2 10.6"><path d="M1 0.4 V10.2 M0 1.6 L1 0.2 L2 1.6 M0 9 L1 10.4 L2 9" fill="none" stroke="#c8c8c8" stroke-width="0.7" stroke-dasharray="1.4 0.8"/><path d="M3.4 4.6 L6.4 0.4 L9.4 4.6 M4.6 3.2 H8.2" fill="none" stroke="#d0d0d0" stroke-width="0.9"/><path d="M3.2 10.2 L6.4 5.4 L9.6 10.2 M4.4 8.6 H8.4" fill="none" stroke="#d0d0d0" stroke-width="0.9"/></svg>
<div class="a" style="left:1201.9px;top:165.2px;width:43.1px;height:10.2px;background:#464646;box-shadow:0 0 0 .5px #5e5e5e;border-radius:1px"></div>
<div class="a" style="left:1235.6px;top:165.2px;width:0.6px;height:10.2px;background:#5e5e5e;"></div>
<svg style="left:1238.2px;top:169.1px" width="5.2" height="3.2" viewBox="0 0 5.2 3.2"><path d="M0.5 0.5 L2.6 2.7 L4.7 0.5" fill="none" stroke="#d0d0d0" stroke-width="1" stroke-linecap="round" stroke-linejoin="round"/></svg>
<span class="t" style="left:1203.6px;top:167.2px;font-size:7.5px;line-height:7.5px;color:#e6e6e6;transform:scaleX(0.9633);">(Autom.)</span>
<span class="t" style="left:1074.4px;top:183.15px;font-size:7.4px;line-height:7.4px;color:#d8d8d8;transform:scaleX(0.9887);font-family:'Liberation Serif',serif;">V/A</span>
<svg style="left:1079.6px;top:190.6px;" width="6.4" height="2.4" viewBox="0 0 6.4 2.4"><path d="M0.4 1.2 H6.2 M1.6 0.2 L0.4 1.2 L1.6 2.2" fill="none" stroke="#d0d0d0" stroke-width="0.7"/></svg>
<div class="a" style="left:1091.4px;top:181.4px;width:43.1px;height:10.6px;background:#464646;box-shadow:0 0 0 .5px #5e5e5e;border-radius:1px"></div>
<div class="a" style="left:1125.3px;top:181.4px;width:0.6px;height:10.6px;background:#5e5e5e;"></div>
<svg style="left:1127.8px;top:185.5px" width="5.2" height="3.2" viewBox="0 0 5.2 3.2"><path d="M0.5 0.5 L2.6 2.7 L4.7 0.5" fill="none" stroke="#d0d0d0" stroke-width="1" stroke-linecap="round" stroke-linejoin="round"/></svg>
<span class="t" style="left:1092.8px;top:183.7px;font-size:7.5px;line-height:7.5px;color:#e6e6e6;transform:scaleX(0.9664);">Metryczn</span>
<div class="a" style="left:1186px;top:182px;width:11px;height:7.6px;background:#dedede;"></div>
<span class="t b" style="left:1186.8px;top:182.75px;font-size:7px;line-height:7px;color:#454545;transform:scaleX(1.0212);">VA</span>
<svg style="left:1186px;top:190.4px;" width="11" height="2.6" viewBox="0 0 11 2.6"><path d="M0.6 1.3 H10.4 M1.8 0.2 L0.4 1.3 L1.8 2.4 M9.2 0.2 L10.6 1.3 L9.2 2.4" fill="none" stroke="#e0e0e0" stroke-width="0.7"/></svg>
<div class="a" style="left:1201.9px;top:181.4px;width:43.1px;height:10.6px;background:#464646;box-shadow:0 0 0 .5px #5e5e5e;border-radius:1px"></div>
<div class="a" style="left:1235.6px;top:181.4px;width:0.6px;height:10.6px;background:#5e5e5e;"></div>
<svg style="left:1238.2px;top:185.5px" width="5.2" height="3.2" viewBox="0 0 5.2 3.2"><path d="M0.5 0.5 L2.6 2.7 L4.7 0.5" fill="none" stroke="#d0d0d0" stroke-width="1" stroke-linecap="round" stroke-linejoin="round"/></svg>
<span class="t" style="left:1203.8px;top:183.7px;font-size:7.5px;line-height:7.5px;color:#e6e6e6;transform:scaleX(1.0147);">-20</span>
<span class="t" style="left:1184px;top:199.1px;font-size:7.5px;line-height:7.5px;color:#d8d8d8;transform:scaleX(0.9309);">Kolor</span>
<div class="a" style="left:1203.8px;top:196.7px;width:42.4px;height:11.1px;background:#000;"></div>
<svg style="left:1234.6px;top:219.5px;" width="8.8" height="2.2" viewBox="0 0 8.8 2.2"><rect x="0" y="0.1" width="2" height="2" rx="0.5" fill="#e4e4e4"/><rect x="3.4" y="0.1" width="2" height="2" rx="0.5" fill="#e4e4e4"/><rect x="6.8" y="0.1" width="2" height="2" rx="0.5" fill="#e4e4e4"/></svg>
<div class="a" style="left:1271.2px;top:89.4px;width:6.8px;height:113.6px;background:#6c6c6c;border-radius:3.4px"></div>
<div class="a" style="left:1069px;top:232.6px;width:199.4px;height:1px;background:#434343;"></div>
<svg style="left:1072.9px;top:242.3px" width="6.2" height="3.8" viewBox="0 0 6.2 3.8"><path d="M0.5 0.5 L3.1 3.3 L5.7 0.5" fill="none" stroke="#c8c8c8" stroke-width="0.9" stroke-linecap="round" stroke-linejoin="round"/></svg>
<span class="t b" style="left:1082.8px;top:240.65px;font-size:7.6px;line-height:7.6px;color:#f0f0f0;transform:scaleX(0.9434);">Opcje tekstowe</span>
<span class="t b" style="left:1076px;top:257.15px;font-size:9.4px;line-height:9.4px;color:#e6e6e6;transform:scaleX(0.9569);font-family:'Liberation Serif',serif;">TT</span>
<span class="t b" style="left:1092.7px;top:257.15px;font-size:9.4px;line-height:9.4px;color:#e6e6e6;transform:scaleX(1.0686);font-family:'Liberation Serif',serif;">T</span>
<span class="t b" style="left:1099.2px;top:259.95px;font-size:6.2px;line-height:6.2px;color:#e6e6e6;transform:scaleX(0.9672);font-family:'Liberation Serif',serif;">T</span>
<span class="t b" style="left:1110.4px;top:257.15px;font-size:9.4px;line-height:9.4px;color:#e6e6e6;transform:scaleX(1.0207);font-family:'Liberation Serif',serif;">T</span>
<span class="t b" style="left:1117px;top:256.85px;font-size:5.2px;line-height:5.2px;color:#e6e6e6;transform:scaleX(1.0000);font-family:'Liberation Serif',serif;">1</span>
<span class="t b" style="left:1125.9px;top:257.15px;font-size:9.4px;line-height:9.4px;color:#e6e6e6;transform:scaleX(1.0048);font-family:'Liberation Serif',serif;">T</span>
<span class="t b" style="left:1132.6px;top:261.65px;font-size:5.2px;line-height:5.2px;color:#e6e6e6;transform:scaleX(1.0000);font-family:'Liberation Serif',serif;">1</span>
<span class="t b" style="left:1142.6px;top:256.95px;font-size:9.4px;line-height:9.4px;color:#e6e6e6;transform:scaleX(1.0845);font-family:'Liberation Serif',serif;">T</span>
<div class="a" style="left:1141.8px;top:266px;width:8.6px;height:0.8px;background:#e6e6e6;"></div>
<span class="t b" style="left:1158px;top:257.15px;font-size:9.4px;line-height:9.4px;color:#e6e6e6;transform:scaleX(1.0845);font-family:'Liberation Serif',serif;">T</span>
<div class="a" style="left:1157.2px;top:261px;width:8.4px;height:0.8px;background:#e6e6e6;"></div>
<span class="t b" style="left:1172.6px;top:257.05px;font-size:9.6px;line-height:9.6px;color:#e6e6e6;transform:scaleX(0.8333);font-family:'Liberation Serif',serif;">1</span>
<span class="t b" style="left:1177px;top:257.05px;font-size:6px;line-height:6px;color:#e6e6e6;transform:scaleX(1.3847);font-family:'Liberation Serif',serif;">st</span>
<span class="t b" style="left:1189px;top:256.85px;font-size:10px;line-height:10px;color:#e6e6e6;transform:scaleX(1.2933);font-family:'Liberation Serif',serif;">½</span>
<span class="t b" style="left:1077px;top:276.45px;font-size:12px;line-height:12px;color:#9c9c9c;transform:scaleX(1.1186);font-family:'Liberation Serif',serif;">fi</span>
<span class="t" style="left:1094.5px;top:275.55px;font-size:12.6px;line-height:12.6px;color:#9c9c9c;transform:scaleX(1.4286);font-family:'Liberation Serif',serif;font-style:italic;font-weight:bold;">o</span>
<span class="t b" style="left:1109.5px;top:276.45px;font-size:12px;line-height:12px;color:#9c9c9c;transform:scaleX(0.9462);font-family:'Liberation Serif',serif;">st</span>
<span class="t" style="left:1125px;top:276.55px;font-size:11.8px;line-height:11.8px;color:#9c9c9c;transform:scaleX(1.2070);font-family:'Liberation Serif',serif;font-style:italic;font-weight:bold;">A</span>
<span class="t b" style="left:1140.6px;top:278.05px;font-size:10px;line-height:10px;color:#9c9c9c;transform:scaleX(1.0000);font-family:'Liberation Serif',serif;">aa</span>
<svg style="left:1140.4px;top:276.4px;" width="10.6" height="2" viewBox="0 0 10.6 2"><path d="M0 1 H10.2 M9 0 L10.4 1 L9 2" fill="none" stroke="#9c9c9c" stroke-width="0.7"/></svg>
<span class="t" style="left:1158px;top:276.55px;font-size:11.8px;line-height:11.8px;color:#9c9c9c;transform:scaleX(1.1653);font-family:'Liberation Serif',serif;font-style:italic;font-weight:bold;">T</span>
<div class="a" style="left:1171.4px;top:277.2px;width:11px;height:9.8px;background:#5c5c5c;border:0.8px solid #8e8e8e;border-radius:1.5px"></div>
<span class="t b" style="left:1174px;top:278.55px;font-size:9px;line-height:9px;color:#a0a0a0;transform:scaleX(1.3778);font-family:'Liberation Serif',serif;">a</span>
<svg style="left:1234.8px;top:300.9px;" width="8.7" height="2.2" viewBox="0 0 8.7 2.2"><rect x="0" y="0.1" width="2" height="2" rx="0.5" fill="#e4e4e4"/><rect x="3.35" y="0.1" width="2" height="2" rx="0.5" fill="#e4e4e4"/><rect x="6.7" y="0.1" width="2" height="2" rx="0.5" fill="#e4e4e4"/></svg>
<div class="a" style="left:1069px;top:313.2px;width:199px;height:1px;background:#414141;"></div>
<svg style="left:1072.9px;top:323.5px" width="6.2" height="3.8" viewBox="0 0 6.2 3.8"><path d="M0.5 0.5 L3.1 3.3 L5.7 0.5" fill="none" stroke="#c8c8c8" stroke-width="0.9" stroke-linecap="round" stroke-linejoin="round"/></svg>
<span class="t b" style="left:1082.8px;top:322.25px;font-size:7.6px;line-height:7.6px;color:#f0f0f0;transform:scaleX(0.9472);">Akapit</span>
<div class="a" style="left:1075px;top:336.2px;width:13.9px;height:13.6px;background:#2e2e2e;"></div>
<svg style="left:1077.7px;top:338.2px;" width="9.2" height="9.6" viewBox="0 0 9.2 9.6"><rect x="0" y="0" width="9.2" height="1.54" fill="#a8a8a8"/><rect x="0" y="2.02" width="6.44" height="1.54" fill="#a8a8a8"/><rect x="0" y="4.03" width="9.2" height="1.54" fill="#a8a8a8"/><rect x="0" y="6.05" width="6.44" height="1.54" fill="#a8a8a8"/><rect x="0" y="8.06" width="9.2" height="1.54" fill="#a8a8a8"/></svg>
<svg style="left:1093.2px;top:338.2px;" width="9.6" height="9.6" viewBox="0 0 9.6 9.6"><rect x="0" y="0" width="9.6" height="1.54" fill="#a8a8a8"/><rect x="1.44" y="2.02" width="6.72" height="1.54" fill="#a8a8a8"/><rect x="0" y="4.03" width="9.6" height="1.54" fill="#a8a8a8"/><rect x="1.44" y="6.05" width="6.72" height="1.54" fill="#a8a8a8"/><rect x="0" y="8.06" width="9.6" height="1.54" fill="#a8a8a8"/></svg>
<svg style="left:1108.9px;top:338.2px;" width="10.1" height="9.6" viewBox="0 0 10.1 9.6"><rect x="0" y="0" width="10.1" height="1.54" fill="#a8a8a8"/><rect x="3.03" y="2.02" width="7.07" height="1.54" fill="#a8a8a8"/><rect x="0" y="4.03" width="10.1" height="1.54" fill="#a8a8a8"/><rect x="3.03" y="6.05" width="7.07" height="1.54" fill="#a8a8a8"/><rect x="0" y="8.06" width="10.1" height="1.54" fill="#a8a8a8"/></svg>
<div class="a" style="left:1155.9px;top:337.8px;width:9.3px;height:10.4px;background:#7c7c7c;"></div>
<div class="a" style="left:1171.8px;top:337.8px;width:9.7px;height:10.4px;background:#7c7c7c;"></div>
<div class="a" style="left:1187.8px;top:337.8px;width:9.4px;height:10.4px;background:#7c7c7c;"></div>
<div class="a" style="left:1233.8px;top:337.8px;width:9.4px;height:10.4px;background:#7c7c7c;"></div>
<svg style="left:1234.3px;top:361.6px;" width="8.9" height="2.2" viewBox="0 0 8.9 2.2"><rect x="0" y="0.1" width="2" height="2" rx="0.5" fill="#e4e4e4"/><rect x="3.45" y="0.1" width="2" height="2" rx="0.5" fill="#e4e4e4"/><rect x="6.9" y="0.1" width="2" height="2" rx="0.5" fill="#e4e4e4"/></svg>
<!-- layers -->
<div class="a" style="left:1069px;top:380.6px;width:211px;height:1.4px;background:#3c3c3c;"></div>
<div class="a" style="left:1069px;top:382px;width:211px;height:20.4px;background:#434343;"></div>
<div class="a" style="left:1069px;top:382px;width:41px;height:21px;background:#535353;"></div>
<div class="a" style="left:1110px;top:382px;width:0.8px;height:20.4px;background:#3a3a3a;"></div>
<span class="t b" style="left:1074.8px;top:389.25px;font-size:7.6px;line-height:7.6px;color:#f0f0f0;transform:scaleX(0.9428);">Warstwy</span>
<span class="t" style="left:1116px;top:389.25px;font-size:7.6px;line-height:7.6px;color:#c4c4c4;transform:scaleX(0.9811);">Kanały</span>
<span class="t" style="left:1151.7px;top:389.25px;font-size:7.6px;line-height:7.6px;color:#c4c4c4;transform:scaleX(0.9803);">Ścieżki</span>
<div class="a" style="left:1269px;top:390.2px;width:7px;height:4.8px;background:#8c8c8c;"></div>
<div class="a" style="left:1072px;top:409.2px;width:74.6px;height:10.2px;background:#404040;box-shadow:0 0 0 .5px #5e5e5e"></div>
<svg style="left:1077px;top:410.8px;" width="6.6" height="7" viewBox="0 0 6.6 7"><circle cx="2.7" cy="2.7" r="2.2" fill="none" stroke="#dcdcdc" stroke-width="0.9"/><path d="M4.4 4.4 L6.2 6.6" stroke="#dcdcdc" stroke-width="1.1" stroke-linecap="round"/></svg>
<span class="t" style="left:1085.6px;top:411.1px;font-size:7.5px;line-height:7.5px;color:#e4e4e4;transform:scaleX(0.9252);">Rodzaj</span>
<svg style="left:1140.5px;top:413.2px" width="5" height="3.2" viewBox="0 0 5 3.2"><path d="M0.5 0.5 L2.5 2.7 L4.5 0.5" fill="none" stroke="#d0d0d0" stroke-width="0.9" stroke-linecap="round" stroke-linejoin="round"/></svg>
<svg style="left:1173px;top:410.2px;" width="9" height="7.4" viewBox="0 0 9 7.4"><rect x="0.45" y="0.45" width="8.1" height="6.5" rx="1" fill="none" stroke="#d0d0d0" stroke-width="0.9"/><path d="M1.6 5.6 L3.4 3.2 L4.6 4.6 L5.6 3.6 L7.4 5.6 Z" fill="#d0d0d0"/></svg>
<svg style="left:1189.4px;top:410px;" width="7.6" height="7.6" viewBox="0 0 7.6 7.6"><circle cx="3.8" cy="3.8" r="3.3" fill="none" stroke="#d0d0d0" stroke-width="0.9"/><path d="M1.5 6.1 A3.3 3.3 0 0 0 6.1 1.5 Z" fill="#d0d0d0"/></svg>
<span class="t b" style="left:1205.6px;top:409.25px;font-size:10px;line-height:10px;color:#d0d0d0;transform:scaleX(1.0494);font-family:'Liberation Serif',serif;">T</span>
<svg style="left:1221.2px;top:410px;" width="8.2" height="7.8" viewBox="0 0 8.2 7.8"><rect x="1.4" y="1.4" width="5.4" height="5" fill="none" stroke="#d0d0d0" stroke-width="0.9"/><rect x="0" y="0" width="2.4" height="2.4" fill="#d0d0d0"/><rect x="5.8" y="0" width="2.4" height="2.4" fill="#d0d0d0"/><rect x="0" y="5.4" width="2.4" height="2.4" fill="#d0d0d0"/><rect x="5.8" y="5.4" width="2.4" height="2.4" fill="#d0d0d0"/></svg>
<svg style="left:1238px;top:409.6px;" width="7.6" height="8.2" viewBox="0 0 7.6 8.2"><path d="M2.6 0.4 H5.4 L7.2 2.2 V7.8 H2.6 Z" fill="none" stroke="#d0d0d0" stroke-width="0.8"/><rect x="0" y="4.2" width="4.6" height="4" fill="#d0d0d0"/></svg>
<div class="a" style="left:1271.4px;top:411.4px;width:4.8px;height:7.4px;background:#3a3a3a;border-radius:1px"></div>
<div class="a" style="left:1270.9px;top:408.2px;width:5.6px;height:5.6px;background:#dedede;border-radius:50%"></div>
<div class="a" style="left:1069px;top:422.6px;width:211px;height:0.8px;background:#4a4a4a;"></div>
<div class="a" style="left:1072px;top:427.4px;width:142.8px;height:10.4px;background:#414141;box-shadow:0 0 0 .5px #5e5e5e"></div>
<span class="t" style="left:1076px;top:429.4px;font-size:7.5px;line-height:7.5px;color:#e4e4e4;transform:scaleX(0.9479);">Normalnie</span>
<svg style="left:1208.7px;top:431.6px" width="5" height="3.2" viewBox="0 0 5 3.2"><path d="M0.5 0.5 L2.5 2.7 L4.5 0.5" fill="none" stroke="#d0d0d0" stroke-width="0.9" stroke-linecap="round" stroke-linejoin="round"/></svg>
<span class="t" style="left:1218.2px;top:429.4px;font-size:7.5px;line-height:7.5px;color:#d8d8d8;transform:scaleX(0.9598);">Krycie:</span>
<div class="a" style="left:1243.2px;top:427.4px;width:22.4px;height:10.4px;background:#454545;box-shadow:0 0 0 .5px #606060;border-radius:1px"></div>
<span class="t" style="left:1244.4px;top:429.4px;font-size:7.5px;line-height:7.5px;color:#ececec;transform:scaleX(0.9279);">100%</span>
<div class="a" style="left:1267px;top:427.4px;width:9px;height:10.4px;background:#474747;box-shadow:0 0 0 .5px #606060"></div>
<svg style="left:1269px;top:431.4px" width="5" height="3.2" viewBox="0 0 5 3.2"><path d="M0.5 0.5 L2.5 2.7 L4.5 0.5" fill="none" stroke="#d0d0d0" stroke-width="0.9" stroke-linecap="round" stroke-linejoin="round"/></svg>
<div class="a" style="left:1069px;top:440.4px;width:211px;height:0.8px;background:#494949;"></div>
<span class="t" style="left:1072px;top:448px;font-size:7.5px;line-height:7.5px;color:#d8d8d8;transform:scaleX(0.9595);">Zablokuj:</span>
<svg style="left:1105.8px;top:447.4px;" width="8" height="8" viewBox="0 0 8 8"><rect x="0.4" y="0.4" width="7.2" height="7.2" fill="none" stroke="#9a9a9a" stroke-width="0.7"/><rect x="0.8" y="0.8" width="3.2" height="3.2" fill="#9a9a9a"/><rect x="4" y="4" width="3.2" height="3.2" fill="#9a9a9a"/></svg>
<svg style="left:1120.2px;top:446.6px;" width="9" height="9.2" viewBox="0 0 9 9.2"><path d="M8.6 0.2 L3.8 5 L5 6.2 L9 1 Z" fill="#a8a8a8"/><path d="M3.2 5.6 C1.8 6 2 7.8 0.4 8.8 C2.8 9.4 4.6 8.4 4.6 6.8 Z" fill="#a8a8a8"/></svg>
<svg style="left:1134.2px;top:447px;" width="8.8" height="8.8" viewBox="0 0 8.8 8.8"><path d="M4.4 0.6 V8.2 M0.6 4.4 H8.2" fill="none" stroke="#cfcfcf" stroke-width="0.8"/><path d="M4.4 0 L5.8 1.7 H3 Z M4.4 8.8 L5.8 7.1 H3 Z M0 4.4 L1.7 3 V5.8 Z M8.8 4.4 L7.1 3 V5.8 Z" fill="#cfcfcf"/></svg>
<svg style="left:1149px;top:447px;" width="9.4" height="8.8" viewBox="0 0 9.4 8.8"><path d="M2 0 V6.8 H9.4 M0 2 H5.6 L7.4 3.8 V8.8" fill="none" stroke="#cfcfcf" stroke-width="0.9"/></svg>
<svg style="left:1164.6px;top:446.8px;" width="7.6" height="8.8" viewBox="0 0 7.6 8.8"><rect x="0" y="3.8" width="7.6" height="5" rx="0.6" fill="#e0e0e0"/><path d="M1.8 4 V2.6 C1.8 0.2 5.8 0.2 5.8 2.6 V4" fill="none" stroke="#e0e0e0" stroke-width="1.1"/><rect x="3.3" y="5.4" width="1" height="1.8" fill="#535353"/></svg>
<span class="t" style="left:1198.9px;top:448px;font-size:7.5px;line-height:7.5px;color:#d8d8d8;transform:scaleX(0.9633);">Wypełnienie:</span>
<div class="a" style="left:1243.2px;top:446.2px;width:22.4px;height:10.4px;background:#454545;box-shadow:0 0 0 .5px #606060;border-radius:1px"></div>
<span class="t" style="left:1244.4px;top:448.1px;font-size:7.5px;line-height:7.5px;color:#ececec;transform:scaleX(0.9279);">100%</span>
<div class="a" style="left:1267px;top:446.2px;width:9px;height:10.4px;background:#474747;box-shadow:0 0 0 .5px #606060"></div>
<svg style="left:1269px;top:450.2px" width="5" height="3.2" viewBox="0 0 5 3.2"><path d="M0.5 0.5 L2.5 2.7 L4.5 0.5" fill="none" stroke="#d0d0d0" stroke-width="0.9" stroke-linecap="round" stroke-linejoin="round"/></svg>
<div class="a" style="left:1069px;top:461.6px;width:200px;height:240px;background:#4d4d4d;"></div>
<div class="a" style="left:1269px;top:461.6px;width:11px;height:240px;background:#4c4c4c;"></div>
<div class="a" style="left:1069px;top:462.2px;width:20.6px;height:26.4px;background:#535353;"></div>
<div class="a" style="left:1089.6px;top:462.2px;width:179.4px;height:26.4px;background:#666666;border-radius:0 2px 2px 0"></div>
<svg style="left:1074.7px;top:473.1px;" width="8.4" height="5.4" viewBox="0 0 8.4 5.4"><path d="M0.2 2.7 C2 -0.4 6.4 -0.4 8.2 2.7 C6.4 5.8 2 5.8 0.2 2.7 Z" fill="#e6e6e6"/><circle cx="4.2" cy="2.7" r="1.7" fill="#535353"/><circle cx="4.2" cy="2.7" r="0.8" fill="#e6e6e6"/></svg>
<div class="a" style="left:1090px;top:463px;width:24.4px;height:24.8px;background:#5a5a5a;border:1px solid #e4e4e4"></div>
<span class="t" style="left:1098.2px;top:469.05px;font-size:12px;line-height:12px;color:#ededed;transform:scaleX(1.1186);font-family:'Liberation Serif',serif;">T</span>
<span class="t" style="left:1117.7px;top:472.5px;font-size:7.5px;line-height:7.5px;color:#f4f4f4;transform:scaleX(0.9787);">Lorem ipsum dolor sit...ipiscing elit, sed do</span>
<div class="a" style="left:1069px;top:488.6px;width:200px;height:1px;background:#474747;"></div>
<div class="a" style="left:1069px;top:489.6px;width:200px;height:26.4px;background:#525252;border-radius:0 2px 2px 0"></div>
<svg style="left:1074.7px;top:500.5px;" width="8.4" height="5.4" viewBox="0 0 8.4 5.4"><path d="M0.2 2.7 C2 -0.4 6.4 -0.4 8.2 2.7 C6.4 5.8 2 5.8 0.2 2.7 Z" fill="#e6e6e6"/><circle cx="4.2" cy="2.7" r="1.7" fill="#535353"/><circle cx="4.2" cy="2.7" r="0.8" fill="#e6e6e6"/></svg>
<div class="a" style="left:1091.9px;top:492.6px;width:15.3px;height:20.6px;background:#fff;box-shadow:0 0 0 .6px #3c3c3c"></div>
<span class="t" style="left:1113px;top:499.9px;font-size:7.5px;line-height:7.5px;color:#e6e6e6;transform:scaleX(0.9886);">Tło</span>
<svg style="left:1251px;top:498.8px;" width="7.4" height="8.6" viewBox="0 0 7.4 8.6"><rect x="0.45" y="3.6" width="6.5" height="4.5" rx="0.6" fill="none" stroke="#c8c8c8" stroke-width="0.9"/><path d="M1.9 3.6 V2.4 C1.9 0.2 5.5 0.2 5.5 2.4 V3.6" fill="none" stroke="#c8c8c8" stroke-width="0.9"/><rect x="3.2" y="5.2" width="1" height="1.4" fill="#c8c8c8"/></svg>
<div class="a" style="left:1069px;top:701.4px;width:211px;height:0.8px;background:#444;"></div>
<div class="a" style="left:1069px;top:702.2px;width:211px;height:17.8px;background:#505050;"></div>
<svg style="left:1143.8px;top:708.4px;" width="10.4" height="5.2" viewBox="0 0 10.4 5.2"><rect x="0.5" y="0.5" width="5.2" height="4.2" rx="2.1" fill="none" stroke="#8e8e8e" stroke-width="1"/><rect x="4.7" y="0.5" width="5.2" height="4.2" rx="2.1" fill="none" stroke="#8e8e8e" stroke-width="1"/></svg>
<span class="t" style="left:1162.8px;top:706.35px;font-size:9.4px;line-height:9.4px;color:#b0b0b0;transform:scaleX(1.2973);font-family:'Liberation Serif',serif;font-style:italic;">fx</span>
<svg style="left:1180.4px;top:706.8px;" width="9.6" height="8.2" viewBox="0 0 9.6 8.2"><rect x="0" y="0" width="9.6" height="8.2" rx="0.8" fill="#a6a6a6"/><circle cx="4.8" cy="4.1" r="2.3" fill="#505050"/></svg>
<svg style="left:1199px;top:706.8px;" width="8.4" height="8.4" viewBox="0 0 8.4 8.4"><circle cx="4.2" cy="4.2" r="3.7" fill="none" stroke="#a6a6a6" stroke-width="0.9"/><path d="M1.6 6.8 A3.7 3.7 0 0 0 6.8 1.6 Z" fill="#a6a6a6"/></svg>
<svg style="left:1216.6px;top:707px;" width="8.8" height="7.8" viewBox="0 0 8.8 7.8"><path d="M0 0.8 H3.4 L4.4 1.8 H8.8 V7.8 H0 Z" fill="#a6a6a6"/></svg>
<svg style="left:1234.8px;top:706.6px;" width="8.4" height="8.6" viewBox="0 0 8.4 8.6"><rect x="0.5" y="0.5" width="7.4" height="7.6" rx="0.8" fill="none" stroke="#a6a6a6" stroke-width="1"/><path d="M4.2 2.6 V6 M2.5 4.3 H5.9" stroke="#a6a6a6" stroke-width="0.9"/></svg>
<svg style="left:1253px;top:706.2px;" width="7.8" height="9.2" viewBox="0 0 7.8 9.2"><path d="M0 1.6 H7.8 M2.6 1.4 V0.4 H5.2 V1.4" fill="none" stroke="#a6a6a6" stroke-width="0.9"/><path d="M1 2.6 H6.8 L6.2 9 H1.6 Z" fill="none" stroke="#a6a6a6" stroke-width="0.9"/><path d="M3 4 V7.6 M4.8 4 V7.6" stroke="#a6a6a6" stroke-width="0.7"/></svg>
<!-- para -->
<div class="a" style="left:890.6px;top:136.8px;width:150.4px;height:149.2px;background:#535353;box-shadow:0 0 0 .8px #2f2f2f, 0 1px 3px rgba(0,0,0,.5)"></div>
<div class="a" style="left:890.6px;top:136.8px;width:150.4px;height:19.8px;background:#434343;"></div>
<div class="a" style="left:940.6px;top:137.4px;width:34.2px;height:19.8px;background:#535353;"></div>
<div class="a" style="left:940px;top:137.4px;width:0.7px;height:19.2px;background:#383838;"></div>
<div class="a" style="left:974.8px;top:137.4px;width:0.7px;height:19.2px;background:#383838;"></div>
<span class="t" style="left:897.8px;top:144.45px;font-size:7.6px;line-height:7.6px;color:#c8c8c8;transform:scaleX(1.0172);">Typografia</span>
<span class="t b" style="left:946.7px;top:144.45px;font-size:7.6px;line-height:7.6px;color:#f4f4f4;transform:scaleX(0.9773);">Akapit</span>
<svg style="left:1013.8px;top:145.5px" width="6.8" height="4.6" viewBox="0 0 6.8 4.6"><path d="M0.4 0.3 L2.86 2.3 L0.4 4.3 M3.94 0.3 L6.6 2.3 L3.94 4.3" fill="none" stroke="#a8a8a8" stroke-width="0.8" stroke-linejoin="round" stroke-linecap="round"/></svg>
<div class="a" style="left:1025px;top:144.8px;width:0.8px;height:7px;background:#a8a8a8;"></div>
<svg style="left:906.7px;top:167.2px;" width="9.3" height="10" viewBox="0 0 9.3 10"><rect x="0" y="0" width="9.3" height="1.6" fill="#b4b4b4"/><rect x="0" y="2.1" width="6.51" height="1.6" fill="#b4b4b4"/><rect x="0" y="4.2" width="9.3" height="1.6" fill="#b4b4b4"/><rect x="0" y="6.3" width="6.51" height="1.6" fill="#b4b4b4"/><rect x="0" y="8.4" width="9.3" height="1.6" fill="#b4b4b4"/></svg>
<svg style="left:922.2px;top:167.2px;" width="10" height="10" viewBox="0 0 10 10"><rect x="0" y="0" width="10" height="1.6" fill="#b4b4b4"/><rect x="1.5" y="2.1" width="7" height="1.6" fill="#b4b4b4"/><rect x="0" y="4.2" width="10" height="1.6" fill="#b4b4b4"/><rect x="1.5" y="6.3" width="7" height="1.6" fill="#b4b4b4"/><rect x="0" y="8.4" width="10" height="1.6" fill="#b4b4b4"/></svg>
<svg style="left:938.3px;top:167.2px;" width="9.7" height="10" viewBox="0 0 9.7 10"><rect x="0" y="0" width="9.7" height="1.6" fill="#b4b4b4"/><rect x="2.91" y="2.1" width="6.79" height="1.6" fill="#b4b4b4"/><rect x="0" y="4.2" width="9.7" height="1.6" fill="#b4b4b4"/><rect x="2.91" y="6.3" width="6.79" height="1.6" fill="#b4b4b4"/><rect x="0" y="8.4" width="9.7" height="1.6" fill="#b4b4b4"/></svg>
<div class="a" style="left:961.2px;top:166.8px;width:9.7px;height:10.2px;background:#767676;border-radius:1px"></div>
<div class="a" style="left:977.5px;top:166.8px;width:9.5px;height:10.2px;background:#767676;border-radius:1px"></div>
<div class="a" style="left:993.3px;top:166.8px;width:9.2px;height:10.2px;background:#767676;border-radius:1px"></div>
<div class="a" style="left:1016px;top:166.8px;width:9.2px;height:10.2px;background:#767676;border-radius:1px"></div>
<svg style="left:895.8px;top:188.2px;" width="10.8" height="9" viewBox="0 0 10.8 9"><path d="M0 3.4 H3.2 M2 2.2 L3.4 3.4 L2 4.6" fill="none" stroke="#cfcfcf" stroke-width="0.8"/><rect x="4.4" y="0" width="1" height="8.4" fill="#cfcfcf"/><rect x="6" y="0.6" width="4" height="7.2" fill="#cfcfcf" opacity=".8"/></svg>
<div class="a" style="left:912.2px;top:188.2px;width:34.5px;height:8.6px;background:#464646;box-shadow:0 0 0 .5px #5a5a5a;border-radius:1px"></div>
<span class="t" style="left:913.8px;top:189.4px;font-size:7.5px;line-height:7.5px;color:#ececec;transform:scaleX(0.9963);">0 pkt</span>
<svg style="left:895.4px;top:202.2px;" width="10.8" height="9" viewBox="0 0 10.8 9"><path d="M0 1.6 H3.2 M2 0.4 L3.4 1.6 L2 2.8" fill="none" stroke="#cfcfcf" stroke-width="0.8"/><rect x="4.8" y="0.6" width="5.2" height="2" fill="#cfcfcf"/><rect x="3.6" y="3.4" width="6.4" height="5" fill="#cfcfcf" opacity=".8"/></svg>
<div class="a" style="left:912.2px;top:202.2px;width:34.5px;height:8.8px;background:#464646;box-shadow:0 0 0 .5px #5a5a5a;border-radius:1px"></div>
<span class="t" style="left:913.8px;top:203.4px;font-size:7.5px;line-height:7.5px;color:#ececec;transform:scaleX(0.9963);">0 pkt</span>
<svg style="left:895.6px;top:220px;" width="10.8" height="9" viewBox="0 0 10.8 9"><path d="M0 1.6 H3.2 M2 0.4 L3.4 1.6 L2 2.8" fill="none" stroke="#cfcfcf" stroke-width="0.8"/><rect x="4" y="0.4" width="6.2" height="2.6" fill="none" stroke="#cfcfcf" stroke-width="0.7"/><rect x="4" y="4" width="6.2" height="5" fill="#cfcfcf" opacity=".8"/></svg>
<div class="a" style="left:912.2px;top:218.9px;width:34.5px;height:9.4px;background:#464646;box-shadow:0 0 0 .5px #5a5a5a;border-radius:1px"></div>
<span class="t" style="left:913.8px;top:220.5px;font-size:7.5px;line-height:7.5px;color:#ececec;transform:scaleX(0.9963);">0 pkt</span>
<svg style="left:970px;top:188.4px;" width="10.8" height="9" viewBox="0 0 10.8 9"><rect x="0" y="0.6" width="4" height="7.2" fill="#cfcfcf" opacity=".8"/><rect x="4.8" y="0" width="1" height="8.4" fill="#cfcfcf"/><path d="M10.6 3.4 H7.2 M8.6 2.2 L7 3.4 L8.6 4.6" fill="none" stroke="#cfcfcf" stroke-width="0.8"/></svg>
<div class="a" style="left:985.6px;top:188px;width:35.6px;height:9px;background:#464646;box-shadow:0 0 0 .5px #5a5a5a;border-radius:1px"></div>
<span class="t" style="left:987.7px;top:189.3px;font-size:7.5px;line-height:7.5px;color:#ececec;transform:scaleX(1.0025);">0 pkt</span>
<svg style="left:969px;top:219.6px;" width="10.8" height="9" viewBox="0 0 10.8 9"><path d="M0 7.6 H3.2 M2 6.4 L3.4 7.6 L2 8.8" fill="none" stroke="#cfcfcf" stroke-width="0.8"/><rect x="4.6" y="0" width="6.2" height="5" fill="#cfcfcf" opacity=".8"/><rect x="4.6" y="6" width="6.2" height="2.6" fill="none" stroke="#cfcfcf" stroke-width="0.7"/></svg>
<div class="a" style="left:985.6px;top:218.9px;width:35.6px;height:9.4px;background:#464646;box-shadow:0 0 0 .5px #5a5a5a;border-radius:1px"></div>
<span class="t" style="left:987.7px;top:220.5px;font-size:7.5px;line-height:7.5px;color:#ececec;transform:scaleX(1.0025);">0 pkt</span>
<div class="a" style="left:898px;top:238.3px;width:6.8px;height:6.5px;background:#4a4a4a;border:0.7px solid #8c8c8c;border-radius:1px"></div>
<span class="t" style="left:910px;top:238.3px;font-size:7.5px;line-height:7.5px;color:#dcdcdc;transform:scaleX(0.9575);">Dziel wyrazy</span>
<span class="t b" style="left:894px;top:257.15px;font-size:7.6px;line-height:7.6px;color:#f0f0f0;transform:scaleX(0.9315);">Punktory i numeracja</span>
<svg style="left:894.8px;top:270px;" width="10.2" height="9.6" viewBox="0 0 10.2 9.6"><circle cx="1.2" cy="2" r="1.1" fill="#dcdcdc"/><circle cx="1.2" cy="7.4" r="1.1" fill="#dcdcdc"/><path d="M3.4 1.2 H10 M3.4 2.8 H10 M3.4 6.6 H10 M3.4 8.2 H10" stroke="#dcdcdc" stroke-width="0.8"/></svg>
<span class="t" style="left:914px;top:269.85px;font-size:5.6px;line-height:5.6px;color:#dcdcdc;transform:scaleX(0.8990);">1</span>
<span class="t" style="left:914px;top:275.25px;font-size:5.6px;line-height:5.6px;color:#dcdcdc;transform:scaleX(0.8990);">2</span>
<svg style="left:917.4px;top:270px;" width="6.6" height="9.6" viewBox="0 0 6.6 9.6"><path d="M0 1.2 H6.4 M0 2.8 H6.4 M0 6.6 H6.4 M0 8.2 H6.4" stroke="#dcdcdc" stroke-width="0.8"/></svg>
<!-- red -->
<div class="a" style="left:1278px;top:4px;width:1px;height:716px;background:#5a5a5a;opacity:.7"></div>
<svg style="left:0;top:0" width="1280" height="720" viewBox="0 0 1280 720"><ellipse cx="998.9" cy="175.6" rx="44" ry="44.3" fill="none" stroke="#fc0808" stroke-width="9.1"/></svg>
<svg style="left:0;top:0" width="1280" height="720" viewBox="0 0 1280 720"><text x="0" y="0" font-family="'Liberation Sans',sans-serif" font-weight="bold" font-size="119" fill="#fb0a0a" stroke="#fb0a0a" stroke-width="2.6" stroke-linejoin="miter" transform="translate(957.2 402.1) scale(0.64 1)">?</text></svg>
</div>
</body>
</html>
